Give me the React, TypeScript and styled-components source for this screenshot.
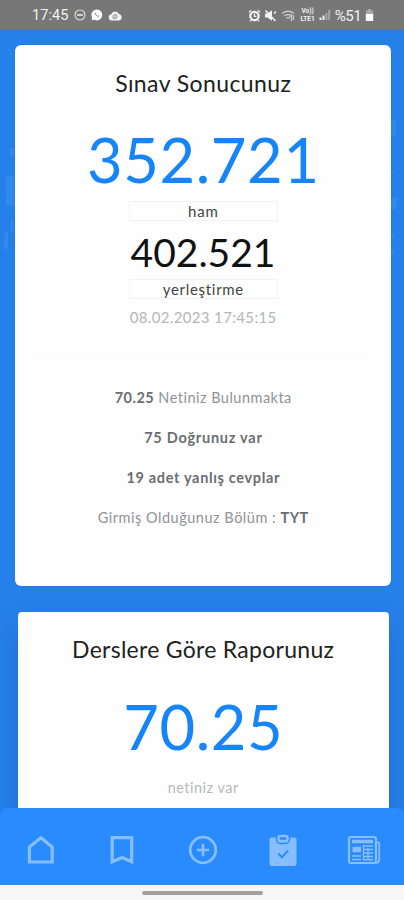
import React from "react";
import styled, { createGlobalStyle } from "styled-components";

const GlobalStyle = createGlobalStyle`
  * { box-sizing: border-box; }
  body { margin: 0; background: #2680e9; font-family: Lato, "Open Sans", sans-serif; }
`;

const Screen = styled.div`
  width: 404px;
  height: 900px;
  overflow: hidden;
  display: flex;
  flex-direction: column;
  background: #2680e9;
`;

const StatusBar = styled.header`
  flex: none;
  height: 30px;
  padding: 0 30px 0 32px;
  display: flex;
  align-items: center;
  justify-content: space-between;
  background: #777777;
  color: #f1f1f1;
  font: 400 14.5px/30px Roboto, sans-serif;
`;

const StatusGroup = styled.div<{ $gap: number }>`
  display: flex;
  align-items: center;
  gap: ${(p) => p.$gap}px;
  height: 30px;
`;

const StatusText = styled.span<{ $size?: number; $spacing?: number }>`
  position: relative;
  top: 1px;
  font-size: ${(p) => p.$size ?? 14.5}px;
  letter-spacing: ${(p) => p.$spacing ?? 0}px;
`;

const Volte = styled.span`
  width: 16px;
  display: flex;
  flex-direction: column;
  align-items: center;
  font: 700 6.5px/8px Roboto, sans-serif;
`;

const Content = styled.main`
  position: relative;
  flex: 1;
  min-height: 0;
  overflow: hidden;
  display: flex;
  flex-direction: column;
  align-items: center;
  gap: 26px;
  padding: 15px 0 0 2px;
`;

const Pattern = styled.svg`
  position: absolute;
  inset: 0;
`;

const Card = styled.section<{ $width: number; $height: number; $raised?: boolean }>`
  position: relative;
  flex: none;
  width: ${(p) => p.$width}px;
  height: ${(p) => p.$height}px;
  border-radius: ${(p) => (p.$raised ? 4 : 6)}px;
  background: #fefefe;
  display: flex;
  flex-direction: column;
  align-items: center;
  box-shadow: ${(p) => (p.$raised ? "0 16px 28px rgba(0, 30, 80, 0.18)" : "0 0 2px #0875e5")};
`;

interface LineProps {
  $size: number;
  $height: number;
  $top?: number;
  $color?: string;
  $weight?: number;
  $spacing?: number;
}

const Line = styled.div<LineProps>`
  flex: none;
  margin-top: ${(p) => p.$top ?? 0}px;
  height: ${(p) => p.$height}px;
  font-size: ${(p) => p.$size}px;
  line-height: ${(p) => p.$height}px;
  font-weight: ${(p) => p.$weight ?? 400};
  color: ${(p) => p.$color ?? "#222"};
  letter-spacing: ${(p) => p.$spacing ?? 0}px;
  margin-right: ${(p) => -(p.$spacing ?? 0)}px;
  white-space: nowrap;
`;

const Strong = styled.b`
  font-weight: 700;
  color: #6a6e73;
`;

const Tag = styled.div<{ $top: number }>`
  flex: none;
  margin-top: ${(p) => p.$top}px;
  width: 149px;
  height: 20px;
  border: 1px solid #f3f3f3;
  display: flex;
  justify-content: center;
`;

const Divider = styled.div`
  width: 336px;
  height: 1px;
  margin-top: 27px;
  background: #fafafa;
`;

const NavBar = styled.nav`
  position: relative;
  flex: none;
  height: 77px;
  padding: 7px 22px 0 23px;
  display: flex;
  align-items: center;
  justify-content: space-between;
  background: #2a8bff;
  border-radius: 8px 8px 0 0;
  color: #86beff;
`;

const NavButton = styled.button`
  width: 36px;
  height: 40px;
  padding: 0;
  border: 0;
  background: none;
  color: inherit;
  display: flex;
  align-items: center;
  justify-content: center;
`;

const GestureArea = styled.footer`
  flex: none;
  height: 15px;
  padding: 6px 0 0 142px;
  background: #f6f6f6;
`;

const Handle = styled.div`
  width: 121px;
  height: 4px;
  border-radius: 2px;
  background: #a2a09f;
`;

const reportLine = { $size: 14.5, $height: 20, $color: "#909397" };

export default function App() {
  return (
    <>
      <GlobalStyle />
      <Screen>
        <StatusBar>
          <StatusGroup $gap={5}>
            <StatusText $spacing={0.1}>17:45</StatusText>
            <svg width="12" height="12" viewBox="0 0 12 12" fill="none" stroke="#d8d8d8" strokeWidth="1.2">
              <circle cx="6" cy="6" r="5" /><path d="M3 6h6" strokeWidth="1.8" />
            </svg>
            <svg width="12" height="12" viewBox="0 0 12 12">
              <path d="M6 .6a5.4 5.4 0 1 1-3 10L.8 11.4 1 8.5A5.4 5.4 0 0 1 6 .6Z" fill="#fff" />
              <path d="M4 3.8q0 2.7 3.8 4.2M5 4l-.6 1.2M7.8 6.5l-1.1.7" stroke="#999" fill="none" />
            </svg>
            <svg width="14" height="11" viewBox="0 0 14 11">
              <path d="M3.5 10.5a3.2 3.2 0 0 1-.3-6.3 4.2 4.2 0 0 1 7.8-.2 3.3 3.3 0 0 1-.3 6.5Z" fill="#f3f3f3" />
              <circle cx="6.9" cy="6.6" r="2" fill="none" stroke="#888" /><path d="m5 8.5 4-4" stroke="#999" />
            </svg>
          </StatusGroup>
          <StatusGroup $gap={3.6}>
            <svg width="13" height="13" viewBox="0 0 13 13" fill="none" stroke="#f3f3f3" strokeWidth="1.8">
              <circle cx="6.5" cy="7" r="4.2" strokeWidth="2.2" /><path d="m1 3.3 2.2-2M12 3.3l-2.2-2M3 11l-1 1.3M10 11l1 1.3M6.5 4.8v2.6h2" strokeWidth="1.2" />
            </svg>
            <svg width="13" height="13" viewBox="0 0 13 13">
              <path d="M1 4.5h2.5L8 1.2v10.6L3.5 8.5H1Z" fill="#f3f3f3" /><path d="m1.5 1.5 10 10.5M10 4.5l2-2" stroke="#f3f3f3" strokeWidth="1.5" />
            </svg>
            <svg width="15" height="13" viewBox="0 0 15 13" fill="none" stroke="#c9c9c9" strokeWidth="1.3">
              <path d="M1 4.5q6-4.5 12 0M3.2 7q3.8-3 7.5 0M5.3 9.2q1.8-1.3 3.4 0" /><path d="m8.5 8 2-2v6M12.5 6v5" />
            </svg>
            <Volte><span>Vo))</span><span>LTE1</span></Volte>
            <svg width="12" height="12" viewBox="0 0 12 12">
              <path d="M.5 11V8.5h2V11zM3.5 11V6.5h2V11z" fill="#eee" /><path d="M6.5 11V4h1.8v7zM9.3 11V1h1.8v10z" fill="#aaa" />
            </svg>
            <StatusText $size={15} $spacing={-0.4}>%51</StatusText>
            <svg width="9" height="13" viewBox="0 0 9 13">
              <path d="M3 0h3v1.5h2.2V5H.8V1.5H3Z" fill="#aaa" /><path d="M.8 5h7.4v7H.8Z" fill="#fff" />
            </svg>
          </StatusGroup>
        </StatusBar>

        <Content>
          <Pattern width="404" height="778" fill="#3288ee">
            <path d="M10 118h6v9h-6zM6 146h10v29H6zM4 219h4v-17h-3zM11 190h2v12h-2z" />
            <path d="M7 152h9M7 157h9" stroke="#2c83e8" />
            <path d="M391 90h5v16h-5zM391 140h4v2h-4zM391 168h7l-3 12h-4zM391 204h3v5h-3zM391 219h4l-2 6h-2z" />
          </Pattern>
          <Card $width={376} $height={541}>
            <Line $size={23} $height={30} $top={23} $spacing={0.4}>Sınav Sonucunuz</Line>
            <Line $size={61.5} $height={64} $top={29} $color="#1684fb" $spacing={0.6}>352.721</Line>
            <Tag $top={10}><Line $size={15} $height={19} $color="#444" $spacing={0.9}>ham</Line></Tag>
            <Line $size={39} $height={48} $top={7} $color="#111">402.521</Line>
            <Tag $top={3}><Line $size={15} $height={18} $color="#444" $spacing={0.7}>yerleştirme</Line></Tag>
            <Line $size={15} $height={20} $top={8} $color="#b3b6ba" $spacing={0.35}>08.02.2023 17:45:15</Line>
            <Divider />
            <Line {...reportLine} $top={33} $spacing={0.48}><Strong>70.25</Strong> Netiniz Bulunmakta</Line>
            <Line {...reportLine} $top={20} $spacing={0.75}><Strong>75 Doğrunuz var</Strong></Line>
            <Line {...reportLine} $top={20} $spacing={0.66}><Strong>19 adet yanlış cevplar</Strong></Line>
            <Line {...reportLine} $top={20} $spacing={0.52}>Girmiş Olduğunuz Bölüm : <Strong>TYT</Strong></Line>
          </Card>
          <Card $width={371} $height={240} $raised>
            <Line $size={23} $height={30} $top={22} $spacing={0.28}>Derslere Göre Raporunuz</Line>
            <Line $size={61.5} $height={64} $top={30} $color="#1684fb" $spacing={0.6}>70.25</Line>
            <Line $size={14.5} $height={20} $top={20} $color="#b6b9bc" $spacing={0.5}>netiniz var</Line>
          </Card>
        </Content>

        <NavBar>
          <NavButton aria-label="home">
            <svg width="30" height="32" viewBox="0 0 30 32" fill="none" stroke="currentColor" strokeWidth="3.2">
              <path d="M3.4 28V13L15 3.8 26.2 13v15Z" />
            </svg>
          </NavButton>
          <NavButton aria-label="saved">
            <svg width="26" height="32" viewBox="0 0 26 32" fill="none" stroke="currentColor" strokeWidth="3.2">
              <path d="M3.2 3.7h19.5v24.1L13 23.5l-9.8 4.3Z" />
            </svg>
          </NavButton>
          <NavButton aria-label="add">
            <svg width="30" height="30" viewBox="0 0 30 30" fill="none" stroke="currentColor" strokeWidth="2.7">
              <circle cx="15" cy="15" r="12.8" /><path d="M15 8.8v12.4M8.8 15h12.4" />
            </svg>
          </NavButton>
          <NavButton aria-label="tasks">
            <svg width="30" height="34" viewBox="0 0 30 34">
              <path d="M3.5 4.5h23q2 0 2 2v24q0 2.5-2.5 2.5H4q-2.5 0-2.5-2.5v-24q0-2 2-2Z" fill="currentColor" />
              <rect x="8.5" y="1" width="13" height="9.5" rx="4" fill="#86beff" stroke="#2a8bff" strokeWidth="1.5" />
              <path d="M11.8 5.5h6.4" stroke="#2a8bff" strokeWidth="2.5" />
              <path d="m10.3 20.5 3.6 3.8 6.3-7" fill="none" stroke="#2a8bff" strokeWidth="2" />
            </svg>
          </NavButton>
          <NavButton aria-label="news">
            <svg width="34" height="32" viewBox="0 0 34 32" fill="none" stroke="currentColor">
              <rect x="2" y="3" width="27" height="26" rx="2" strokeWidth="2.2" />
              <path d="M29 8.5h3.2V26q0 3-3.2 3" strokeWidth="1.7" />
              <path d="M5 7.5h21" strokeWidth="3.5" />
              <path d="M5.5 15.5h8.5" strokeWidth="5.5" />
              <path d="M16.5 12h9.5M16.5 15.5h9.5M16.5 19h9.5M5 22h9M5 25.5h9M16.5 22.5h9.5M16.5 25.7h9.5M16.5 11v15M21 14v12" strokeWidth="1.4" />
            </svg>
          </NavButton>
        </NavBar>
        <GestureArea><Handle /></GestureArea>
      </Screen>
    </>
  );
}
